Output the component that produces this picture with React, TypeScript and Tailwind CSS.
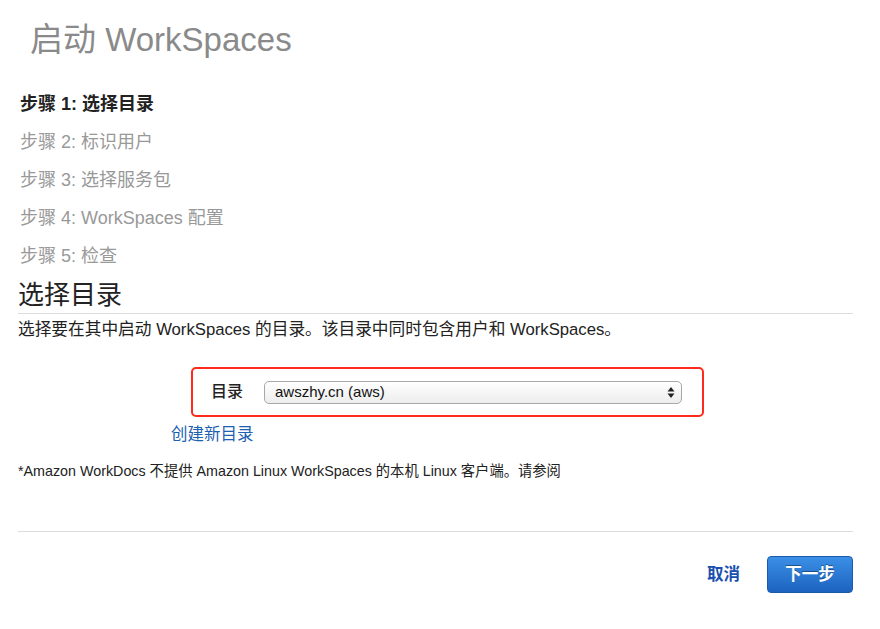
const font = { fontFamily: '"Liberation Sans", "Noto Sans CJK SC", sans-serif' };

const steps = [
  "步骤 1: 选择目录",
  "步骤 2: 标识用户",
  "步骤 3: 选择服务包",
  "步骤 4: WorkSpaces 配置",
  "步骤 5: 检查",
];

const App = () => {
  return (
    <div className="w-[880px] h-[629px] bg-white overflow-hidden pl-[18px] pr-[27px]" style={font}>
      <div className="h-[80px] flex items-center pl-[12px] text-[33px] text-[#8a8a8a]">
        启动 WorkSpaces
      </div>

      <div className="mt-[5px] pl-[2px]">
        {steps.map((s, i) => (
          <div
            key={s}
            className={
              i === 0
                ? "h-[38px] leading-[38px] text-[18px] font-bold text-[#222]"
                : "h-[38px] leading-[38px] text-[18px] text-[#999]"
            }
          >
            {s}
          </div>
        ))}
      </div>

      <h2 className="mt-[2px] h-[37px] leading-[36px] text-[26px] text-[#222] border-b border-[#dcdcdc]">
        选择目录
      </h2>
      <p className="h-[32px] leading-[32px] text-[16.7px] text-[#222]">
        选择要在其中启动 WorkSpaces 的目录。该目录中同时包含用户和 WorkSpaces。
      </p>

      <div className="mt-[21px] ml-[173px] w-[513px] h-[50px] border-2 border-[#ff2a1a] rounded-[5px] flex items-center pl-[18px]">
        <span className="text-[16px] font-medium text-[#222] w-[53px]">目录</span>
        <div className="w-[418px] h-[23px] rounded-[5px] border border-[#a8a8a8] bg-gradient-to-b from-white to-[#ededed] flex items-center justify-between pl-[10px] pr-[6px] shadow-[inset_0_1px_0_#fff]">
          <span className="text-[15px] text-[#111]">awszhy.cn (aws)</span>
          <svg width="8" height="13" viewBox="0 0 8 13">
            <path d="M4 1 L7.5 5.5 L0.5 5.5 Z" fill="#222" />
            <path d="M4 12 L7.5 7.5 L0.5 7.5 Z" fill="#222" />
          </svg>
        </div>
      </div>

      <a className="mt-[7px] ml-[153px] block h-[20px] leading-[20px] text-[16.5px] text-[#1d61b1]">创建新目录</a>

      <p className="mt-[17px] h-[20px] leading-[20px] text-[14.3px] text-[#222]">
        *Amazon WorkDocs 不提供 Amazon Linux WorkSpaces 的本机 Linux 客户端。请参阅
      </p>

      <div className="mt-[50px] border-t border-[#dcdcdc]" />

      <div className="mt-[24px] flex justify-end items-center gap-[27px]">
        <a className="text-[16.5px] font-bold text-[#1a4faf]">取消</a>
        <button className="w-[86px] h-[37px] rounded-[4px] border border-[#1b5aa8] bg-gradient-to-b from-[#3b8fe6] to-[#1c63bf] text-white text-[16.5px] font-bold [text-shadow:0_-1px_0_rgba(0,0,0,0.4)]">
          下一步
        </button>
      </div>
    </div>
  );
};

export default App;
